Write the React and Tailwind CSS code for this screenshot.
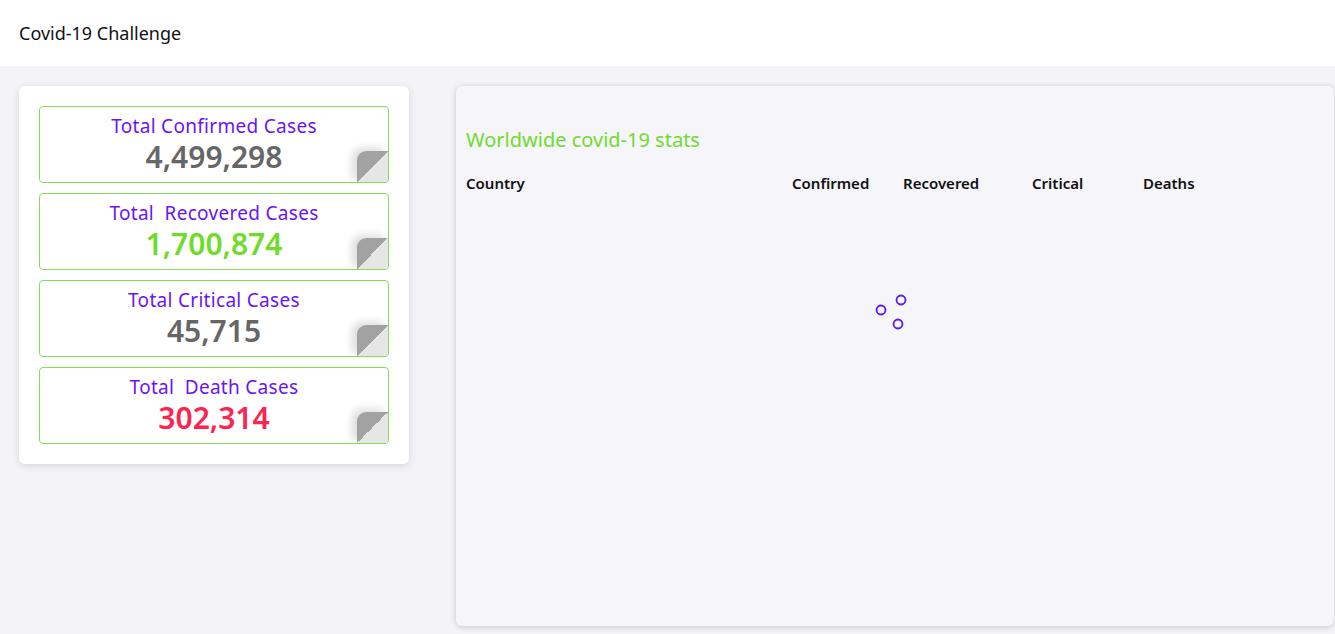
import React from 'react';

const stats = [
  { title: 'Total Confirmed Cases', value: '4,499,298', color: 'text-[#666666]' },
  { title: 'Total\u00a0 Recovered Cases', value: '1,700,874', color: 'text-[#6fdc2c]' },
  { title: 'Total Critical Cases', value: '45,715', color: 'text-[#666666]' },
  { title: 'Total\u00a0 Death Cases', value: '302,314', color: 'text-[#fb2552]' },
];

const StatCard = ({ title, value, color }) => (
  <div className="relative h-[77px] bg-white border border-[#86dc5a] rounded-[4px] flex flex-col items-center pt-[7px] overflow-hidden">
    <div className="text-[19px] leading-[25px] text-[#6a14f5] tracking-[0.3px]">{title}</div>
    <div className={`text-[30px] leading-[36px] font-semibold ${color}`}>{value}</div>
    <div className="absolute right-0 bottom-0 w-[31px] h-[31px] rounded-tl-[9px] bg-[linear-gradient(135deg,#a2a2a2_50%,#e6e6e6_50%)] shadow-[-5px_-3px_9px_rgba(0,0,0,0.14)]" />
  </div>
);

const Spinner = () => (
  <svg width="40" height="40" viewBox="0 0 40 40">
    <circle cx="9" cy="17" r="4.5" fill="none" stroke="#5a16f0" strokeWidth="1.8" />
    <circle cx="29" cy="7" r="4.5" fill="none" stroke="#5a16f0" strokeWidth="1.8" />
    <circle cx="26" cy="31" r="4.5" fill="none" stroke="#5a16f0" strokeWidth="1.8" />
  </svg>
);

export default function App() {
  return (
    <div className="min-h-screen bg-[#f4f4f8] font-['Noto_Sans',sans-serif]">
      <header className="h-[66px] bg-white flex items-center px-[19px]">
        <h1 className="text-[18px] text-[#111]">Covid-19 Challenge</h1>
      </header>
      <main className="flex items-start pl-[19px] pr-[1px] pt-[20px] gap-[47px]">
        <div className="w-[390px] bg-white rounded-[6px] shadow-[0_2px_8px_rgba(0,0,0,0.12)] px-[20px] py-[20px] flex flex-col gap-[10px]">
          {stats.map((s) => (
            <StatCard key={s.title} {...s} />
          ))}
        </div>
        <div className="flex-1 h-[540px] bg-[#f6f5fa] rounded-[6px] shadow-[0_1px_6px_rgba(0,0,0,0.18)] px-[10px] pt-[40px]">
          <h2 className="text-[20px] leading-[28px] text-[#6fdc2c] mb-[19px]">Worldwide covid-19 stats</h2>
          <div className="grid grid-cols-[326px_111px_129px_111px_1fr] text-[15px] font-semibold text-[#111] leading-[20px]">
            <div>Country</div>
            <div>Confirmed</div>
            <div>Recovered</div>
            <div>Critical</div>
            <div>Deaths</div>
          </div>
          <div className="flex justify-center pt-[100px] pr-[6px]">
            <Spinner />
          </div>
        </div>
      </main>
    </div>
  );
}
